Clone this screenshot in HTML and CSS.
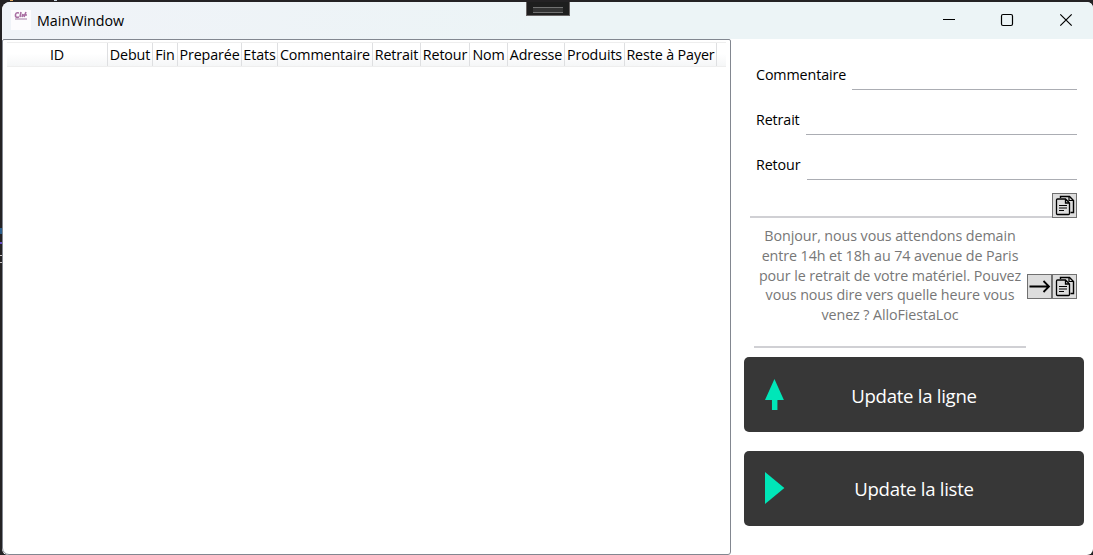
FILE: index.html
```html
<!DOCTYPE html>
<html lang="fr">
<head>
<meta charset="utf-8">
<title>MainWindow</title>
<link rel="stylesheet" href="styles.css">
</head>
<body>
<svg class="symbols" width="0" height="0">
  <symbol id="copy" viewBox="0 0 23 23">
    <path d="M7.500 4V2.500H16.500L20.500 6.500V18.500H17.500" fill="#ddd" stroke="#000" stroke-width="1.400"/>
    <path d="M16 2.500V6.500H20" fill="none" stroke="#000" stroke-width="1.200"/>
    <path d="M4.500 5H12.500L16.500 9V19.500Q16.500 20.500 15.500 20.500H4.500Q3.500 20.500 3.500 19.500V6Q3.500 5 4.500 5ZM12.500 5V9H16.500" fill="#ddd" stroke="#000" stroke-width="1.300"/>
    <path d="M6 11.500H14M6 14H14M6 16.500H11" fill="none" stroke="#000" stroke-width="1.100"/>
  </symbol>
</svg>
<div class="window">
  <header class="titlebar">
    <svg class="logo" width="20" height="20" viewBox="0 0 20 20">
      <rect width="20" height="20" fill="#fdfcfe"/>
      <path d="M8 3Q4 2 4.500 6Q5 8 8 7M10 2L9 7M12 4L11 7M15 2L13 7M12 5H16" fill="none" stroke="#944b8b" stroke-width="1.600" opacity=".8"/>
      <path d="M4 9H16" stroke="#a884a8" stroke-width="1.500" opacity=".7"/>
    </svg>
    <span class="title">MainWindow</span>
    <svg class="controls" width="120" height="14" viewBox="0 0 120 14" fill="none" stroke="#000">
      <path d="M0 6.500H12" />
      <rect x="58.500" y="1.500" width="11" height="11" rx="1.500" stroke-width="1.200"/>
      <path d="M117.300 1.300L128.700 12.700M128.700 1.300L117.300 12.700" stroke-width="1.200"/>
    </svg>
    <div class="grip"></div>
  </header>
  <main class="content">
    <section class="table">
      <div class="head">
        <span>ID</span><span>Debut</span><span>Fin</span><span>Preparée</span><span>Etats</span><span>Commentaire</span><span>Retrait</span><span>Retour</span><span>Nom</span><span>Adresse</span><span>Produits</span><span>Reste à Payer</span>
      </div>
    </section>
    <section class="panel">
      <label class="field"><span class="w-comment">Commentaire</span><i></i></label>
      <label class="field"><span class="w-retrait">Retrait</span><i></i></label>
      <label class="field"><span class="w-retour">Retour</span><i></i></label>
      <div class="copyrow"><i></i><button class="tool"><svg viewBox="0 0 23 23"><use href="#copy"/></svg></button></div>
      <div class="message">
        <p><span>Bonjour, nous vous attendons demain</span><span>entre 14h et 18h au 74 avenue de Paris</span><span>pour le retrait de votre matériel. Pouvez</span><span>vous nous dire vers quelle heure vous</span><span>venez ? AlloFiestaLoc</span></p>
        <button class="tool"><svg viewBox="0 0 23 23" fill="none" stroke="#000" stroke-width="1.800"><path d="M1.500 11.500H20.500M15.500 6L21 11.500L15.500 17"/></svg></button>
        <button class="tool"><svg viewBox="0 0 23 23"><use href="#copy"/></svg></button>
      </div>
      <button class="action"><svg width="20" height="32" viewBox="0 0 20 32"><path d="M9.500 0L19 21H12.500V31H7V21H0Z"/></svg><span>Update la ligne</span></button>
      <button class="action second"><svg width="20" height="32" viewBox="0 0 20 32"><path d="M0 0L19.500 16L0 32Z"/></svg><span>Update la liste</span></button>
    </section>
  </main>
</div>
</body>
</html>
```

FILE: styles.css
```css
* { box-sizing: border-box; }
body {
  margin: 0; width: 1093px; height: 555px; overflow: hidden;
  padding: 2px 0 0 2px;
  background:
    linear-gradient(#2d5f8c, #2d5f8c) 0 228px / 2px 6px no-repeat,
    linear-gradient(#6a4fc8, #6a4fc8) 0 242px / 2px 2px no-repeat,
    linear-gradient(#c9c4c4, #c9c4c4) 0 255px / 2px 1px no-repeat,
    linear-gradient(#c9c4c4, #c9c4c4) 0 262px / 2px 1px no-repeat,
    linear-gradient(#e0a860, #e0a860) 10px 0 / 3px 1px no-repeat,
    linear-gradient(#c8d4e0, #c8d4e0) 54px 0 / 3px 1px no-repeat,
    #242224;
  font: 14.3px/20px "Open Sans", "Noto Sans", sans-serif; color: #000;
}
.symbols { position: absolute; }
.window {
  width: 1091px; height: 553px; background: #fff;
  border-radius: 8px 6px 6px 6px; overflow: hidden; position: relative;
}
.titlebar {
  height: 37px; display: flex; align-items: center;
  padding: 0 21px 1px 9px; background: linear-gradient(90deg, #f0f3f8, #ecf4f6 50%);
}
.title { margin-left: 6px; padding-top: 1px; letter-spacing: 0; }
.controls { margin-left: auto; margin-right: 9px; overflow: visible; }
.grip {
  position: absolute; left: 524px; top: -1px; width: 44px; height: 15px;
  background: #1e1e1e; border: 1px solid #696565;
}
.grip::after {
  content: ""; display: block; height: 4px; margin: 5px 6px;
  border: solid #717171; border-width: 1px 0; background: #333;
}
.content { display: flex; height: 516px; }
.table {
  width: 729px; padding: 2px 4px; border: 1px solid #828790; border-radius: 2px 2px 3px 7px;
}
.head {
  height: 25px; display: grid;
  grid-template-columns: 101px 45px 25px 64px 36px 95px 48px 49px 38px 57px 60px 92px;
  background: linear-gradient(#fff 45%, #f5f6f7);
  border: solid #eee; border-width: 1px 0;
}
.head span {
  border-right: 1px solid #dedfe1; text-align: center; white-space: nowrap;
  line-height: 23px; letter-spacing: -.12px; display: flex; justify-content: center;
}
.panel { flex: 1; padding: 6px 9px 0 13px; }
.field { display: flex; height: 45px; padding: 0 7px 0 12px; }
.field span { line-height: 60px; letter-spacing: -.12px; }
.field i { flex: 1; height: 45px; border-bottom: 1px solid #abadb3; }
.w-comment { width: 96px; }
.w-retrait { width: 50px; }
.w-retour { width: 51px; }
.copyrow { display: flex; align-items: flex-end; height: 37px; margin: 1px 7px 0 6px; }
.copyrow i { flex: 1; height: 2px; background: #d0d0d4; }
.tool {
  width: 25px; height: 25px; flex: none; padding: 0; background: #ddd;
  border: 1px solid #707070;
}
.tool svg { display: block; width: 23px; height: 23px; }
.message { height: 131px; display: flex; padding: 0 7px 0 10px; }
.message p {
  width: 272px; height: 130px; margin: 0 1px 0 0; padding-top: 8px;
  display: flex; flex-direction: column; align-items: center;
  border-bottom: 2px solid #d0d0d4; color: #777;
}
.message p span { white-space: nowrap; line-height: 19.8px; letter-spacing: -.09px; }
.message .tool { margin-top: 56px; }
.action {
  display: flex; align-items: center; position: relative; width: 340px; height: 75px;
  margin: 8px 0 0; padding: 0 21px; border: 0; border-radius: 5px; background: #373737;
  color: #fff; font: 18.6px/26px "Open Sans", sans-serif;
}
.action svg { fill: #00e6b8; }
.action span { width: 300px; margin-left: -20px; padding-top: 2px; letter-spacing: -.28px; }
.second { margin-top: 19px; }
.second svg { margin-top: -2px; }
.second span { padding-top: 0; }
```
